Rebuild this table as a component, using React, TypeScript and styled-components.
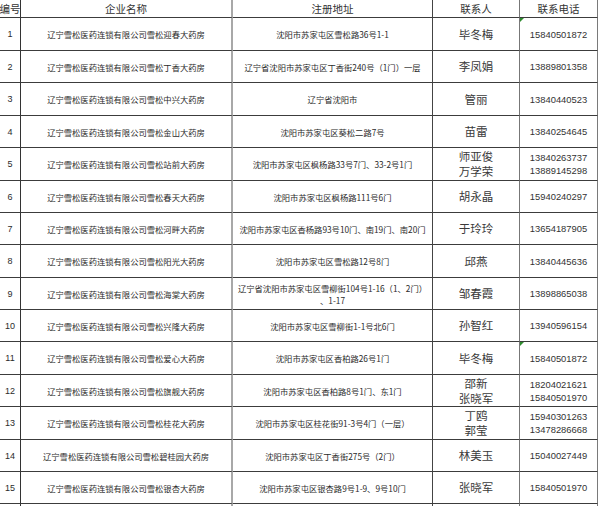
import React from "react";
import styled, { createGlobalStyle, css } from "styled-components";

const GlobalStyle = createGlobalStyle`
  html, body {
    margin: 0;
    padding: 0;
    background: #fff;
  }
`;

const Sheet = styled.div`
  width: 600px;
  height: 506px;
  overflow: hidden;
  background: #fff;
  color: #2b2b2b;
  font-family: "Noto Sans CJK SC", "Liberation Sans", sans-serif;
`;

const Row = styled.div<{ $h: number }>`
  display: grid;
  grid-template-columns: 21px 212px 200px 87px 78px;
  height: ${(p) => p.$h}px;
`;

const Cell = styled.div`
  position: relative;
  display: flex;
  flex-direction: column;
  align-items: center;
  justify-content: center;
  text-align: center;
  box-sizing: border-box;
  border-bottom: 1px solid #3c3c3c;
  border-right: 1px solid #3c3c3c;
  white-space: nowrap;
`;

const NoCell = styled(Cell)`
  font-family: "Liberation Sans", sans-serif;
  font-size: 9px;
  border-right-color: #333;
`;

const NameCell = styled(Cell)`
  font-size: 8.3px;
  border-right: 2px solid #a8a8a8;
`;

const AddrCell = styled(Cell)`
  font-size: 8.3px;
  line-height: 12px;
  border-right-color: #444;
`;

const PersonCell = styled(Cell)`
  font-size: 11.5px;
  line-height: 15px;
  color: #3a3a3a;
  border-right-color: #777;
`;

const PhoneCell = styled(Cell)<{ $flag?: boolean }>`
  font-family: "Liberation Sans", sans-serif;
  font-size: 9.4px;
  line-height: 13px;
  color: #333;
  border-right-color: #7a7a7a;
  ${(p) =>
    p.$flag &&
    css`
      &::before {
        content: "";
        position: absolute;
        left: 0;
        top: 0;
        border-top: 4px solid #2e8b2e;
        border-right: 4px solid transparent;
      }
    `}
`;

const HeadCell = styled(Cell)`
  font-size: 10.5px;
  color: #333;
`;

const HeadNo = styled(HeadCell)`
  border-right-color: #333;
`;

const HeadName = styled(HeadCell)`
  border-right: 2px solid #a8a8a8;
`;

const HeadAddr = styled(HeadCell)`
  border-right-color: #444;
`;

const HeadPerson = styled(HeadCell)`
  border-right-color: #777;
`;

const HeadPhone = styled(HeadCell)`
  border-right-color: #7a7a7a;
`;

const prefix = "辽宁雪松医药连锁有限公司雪松";

type Item = {
  store: string;
  addr: string[];
  people: string[];
  phones: string[];
  flag?: boolean;
};

const items: Item[] = [
  { store: "迎春", addr: ["沈阳市苏家屯区雪松路36号1-1"], people: ["毕冬梅"], phones: ["15840501872"], flag: true },
  { store: "丁香", addr: ["辽宁省沈阳市苏家屯区丁香街240号（1门）一层"], people: ["李凤娟"], phones: ["13889801358"] },
  { store: "中兴", addr: ["辽宁省沈阳市"], people: ["管丽"], phones: ["13840440523"] },
  { store: "金山", addr: ["沈阳市苏家屯区葵松二路7号"], people: ["苗雷"], phones: ["13840254645"] },
  { store: "站前", addr: ["沈阳市苏家屯区枫杨路33号7门、33-2号1门"], people: ["师亚俊", "万学荣"], phones: ["13840263737", "13889145298"] },
  { store: "春天", addr: ["沈阳市苏家屯区枫杨路111号6门"], people: ["胡永晶"], phones: ["15940240297"] },
  { store: "河畔", addr: ["沈阳市苏家屯区香杨路93号10门、南19门、南20门"], people: ["于玲玲"], phones: ["13654187905"] },
  { store: "阳光", addr: ["沈阳市苏家屯区雪松路12号8门"], people: ["邱燕"], phones: ["13840445636"] },
  { store: "海棠", addr: ["辽宁省沈阳市苏家屯区雪柳街104号1-16（1、2门）", "、1-17"], people: ["邹春霞"], phones: ["13898865038"] },
  { store: "兴隆", addr: ["沈阳市苏家屯区雪柳街1-1号北6门"], people: ["孙智红"], phones: ["13940596154"] },
  { store: "爱心", addr: ["沈阳市苏家屯区香柏路26号1门"], people: ["毕冬梅"], phones: ["15840501872"], flag: true },
  { store: "旗舰", addr: ["沈阳市苏家屯区香柏路8号1门、东1门"], people: ["邵新", "张晓军"], phones: ["18204021621", "15840501970"] },
  { store: "桂花", addr: ["沈阳市苏家屯区桂花街91-3号4门（一层）"], people: ["丁鸥", "郭莹"], phones: ["15940301263", "13478286668"] },
  { store: "碧桂园", addr: ["沈阳市苏家屯区丁香街275号（2门）"], people: ["林美玉"], phones: ["15040027449"] },
  { store: "银杏", addr: ["沈阳市苏家屯区银杏路9号1-9、9号10门"], people: ["张晓军"], phones: ["15840501970"] },
];

const heights = [33, 32, 33, 32, 33, 32, 32, 33, 32, 32, 33, 32, 33, 32, 32];

const lines = (list: string[]) => list.map((t, i) => <div key={i}>{t}</div>);

export default function App() {
  return (
    <>
      <GlobalStyle />
      <Sheet>
        <Row $h={18}>
          <HeadNo>编号</HeadNo>
          <HeadName>企业名称</HeadName>
          <HeadAddr>注册地址</HeadAddr>
          <HeadPerson>联系人</HeadPerson>
          <HeadPhone>联系电话</HeadPhone>
        </Row>
        {items.map((item, i) => (
          <Row key={i} $h={heights[i]}>
            <NoCell>{i + 1}</NoCell>
            <NameCell>
              {prefix}
              {item.store}大药房
            </NameCell>
            <AddrCell>{lines(item.addr)}</AddrCell>
            <PersonCell>{lines(item.people)}</PersonCell>
            <PhoneCell $flag={item.flag}>{lines(item.phones)}</PhoneCell>
          </Row>
        ))}
        <Row $h={20}>
          <NoCell />
          <NameCell />
          <AddrCell />
          <PersonCell />
          <PhoneCell />
        </Row>
      </Sheet>
    </>
  );
}
